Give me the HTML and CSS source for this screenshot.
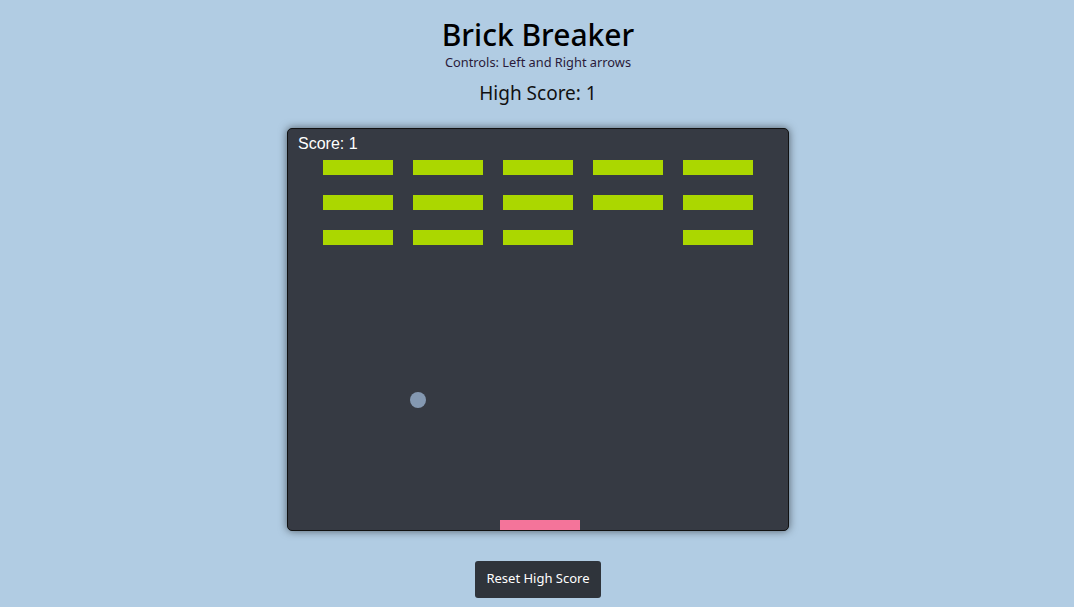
FILE: index.html
```html
<!DOCTYPE html>
<html>
<head>
<meta charset="utf-8">
<title>Brick Breaker</title>
<link rel="stylesheet" href="styles.css">
</head>
<body>
<main class="page">
  <h1 class="title">Brick Breaker</h1>
  <p class="controls">Controls: Left and Right arrows</p>
  <h2 class="high-score">High Score: 1</h2>
  <div class="board">
    <div class="score">Score: 1</div>
    <div class="bricks">
      <span class="brick"></span><span class="brick"></span><span class="brick"></span><span class="brick"></span><span class="brick"></span>
      <span class="brick"></span><span class="brick"></span><span class="brick"></span><span class="brick"></span><span class="brick"></span>
      <span class="brick"></span><span class="brick"></span><span class="brick"></span><span class="brick gone"></span><span class="brick"></span>
    </div>
    <div class="ball"></div>
    <div class="paddle"></div>
  </div>
  <button class="reset">Reset High Score</button>
</main>
</body>
</html>
```

FILE: styles.css
```css
html, body {
  margin: 0;
  padding: 0;
  background: #b1cce3;
}
.page {
  display: flex;
  flex-direction: column;
  align-items: center;
  font-family: "Noto Sans", "DejaVu Sans", sans-serif;
  color: #111;
  padding: 16px 0 0 2px;
}
.title {
  margin: 0;
  font-size: 30px;
  font-weight: 500;
  line-height: 38px;
  color: #000;
}
.controls {
  margin: 0;
  font-size: 12.8px;
  line-height: 16px;
  color: #2a1a3a;
}
.high-score {
  margin: 10px 0 0;
  font-size: 19px;
  font-weight: 400;
  line-height: 26px;
}
.board {
  position: relative;
  margin-top: 22px;
  width: 500px;
  height: 401px;
  background: #363a43;
  border: 1px solid #111;
  border-radius: 5px;
  box-shadow: 0 0 8px rgba(0, 0, 0, 0.55);
}
.score {
  position: absolute;
  left: 10px;
  top: 6px;
  font-family: "Liberation Sans", Arial, sans-serif;
  font-size: 16px;
  color: #fff;
}
.bricks {
  position: absolute;
  left: 35px;
  top: 31px;
  display: grid;
  grid-template-columns: repeat(5, 70px);
  grid-auto-rows: 15px;
  column-gap: 20px;
  row-gap: 20px;
}
.brick {
  background: #abd700;
}
.brick.gone {
  visibility: hidden;
}
.ball {
  position: absolute;
  left: 122px;
  top: 263px;
  width: 16px;
  height: 16px;
  border-radius: 50%;
  background: #8498b1;
}
.paddle {
  position: absolute;
  left: 212px;
  bottom: 0;
  width: 80px;
  height: 10px;
  background: #f4749a;
}
.reset {
  margin-top: 30px;
  padding: 0 11px 3px;
  height: 37px;
  border: none;
  border-radius: 3px;
  background: #2f343b;
  color: #fff;
  font-family: "Noto Sans", "DejaVu Sans", sans-serif;
  font-size: 13px;
}
```
